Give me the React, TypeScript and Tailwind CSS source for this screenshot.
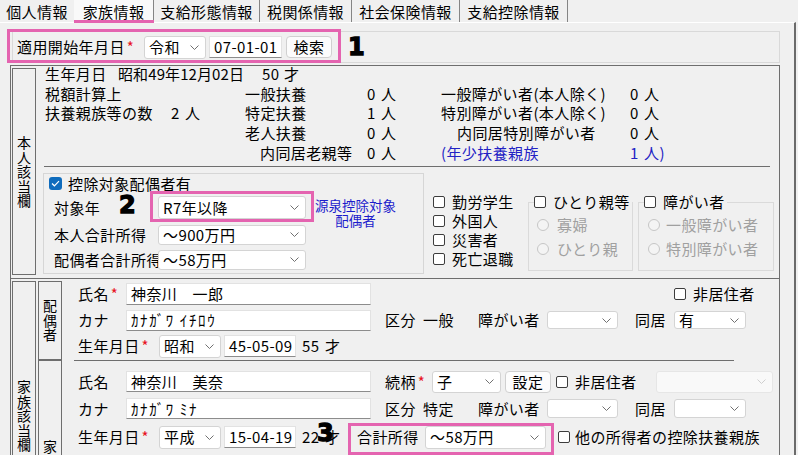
import React from "react";

function Chev({ light }: { light?: boolean }) {
  return (
    <svg width="9" height="5" viewBox="0 0 9 5" className="shrink-0">
      <path d="M0.5 0.5 L4.5 4.5 L8.5 0.5" fill="none" stroke={light ? "#cfcfcf" : "#707070"} strokeWidth="1" />
    </svg>
  );
}

function Sel({ cls, text, disabled }: { cls: string; text?: string; disabled?: boolean }) {
  return (
    <div
      className={`flex items-center justify-between shrink-0 rounded-[3px] border pl-[4px] pr-[6px] ${
        disabled ? "bg-[#f9f9f9] border-[#e6e6e6]" : "bg-white border-[#d4d4d4]"
      } ${cls}`}
    >
      <span className="whitespace-nowrap">{text ?? ""}</span>
      <Chev light={disabled} />
    </div>
  );
}

function Inp({ cls, text }: { cls: string; text: string }) {
  return (
    <div
      className={`flex items-center shrink-0 bg-white border border-[#e2e2e2] border-b-[#8c8c8c] pl-[4px] whitespace-nowrap ${cls}`}
    >
      {text}
    </div>
  );
}

function Btn({ cls, text }: { cls: string; text: string }) {
  return (
    <div
      className={`flex items-center justify-center shrink-0 bg-[#fcfcfc] border border-[#d0d0d0] rounded-[4px] ${cls}`}
    >
      {text}
    </div>
  );
}

function Cb({ checked }: { checked?: boolean }) {
  if (checked)
    return (
      <span className="flex items-center justify-center shrink-0 w-[13px] h-[13px] rounded-[3px] bg-[#0f6cbd]">
        <svg width="9" height="7" viewBox="0 0 9 7">
          <path d="M1 3.5 L3.4 5.8 L8 1.2" fill="none" stroke="white" strokeWidth="1.2" />
        </svg>
      </span>
    );
  return <span className="block shrink-0 w-[12px] h-[12px] rounded-[2px] border border-[#3c3c3c] bg-white" />;
}

function Radio() {
  return <span className="block shrink-0 w-[12px] h-[12px] rounded-full border border-[#c6c6c6] bg-[#f4f4f4]" />;
}

function Req() {
  return <span className="text-[#e81123] ml-[2px]">*</span>;
}

function Num({ n, u = "人" }: { n: string; u?: string }) {
  return (
    <span className="flex">
      <span className="inline-block w-[14px]">{n}</span>
      <span>{u}</span>
    </span>
  );
}

function VLabel({ text, cls }: { text: string; cls: string }) {
  return (
    <div className={`flex flex-col items-center shrink-0 w-[24px] border border-[#6e6e6e] ${cls}`}>
      <span className="[writing-mode:vertical-rl] [text-orientation:upright] text-[14px] leading-[22px] tracking-[0.4px]">
        {text}
      </span>
    </div>
  );
}

const PINK = "border-[#e464b0]";
const BIG = "absolute text-[24px] leading-[24px] font-bold font-['DejaVu_Sans',sans-serif] [-webkit-text-stroke:1.3px_black] tracking-normal";

export default function App() {
  return (
    <div className="relative w-[798px] h-[455px] overflow-hidden bg-[#f0f0f0] text-[15px] leading-[20px] tracking-[0.4px] text-black font-['Noto_Sans_CJK_JP','Noto_Sans',sans-serif]">
      {/* Tabs */}
      <div className="flex h-[22px]">
        <div className="w-[74px] h-[22px] leading-[24px] text-center">個人情報</div>
        <div className="relative w-[80px] h-[22px] leading-[24px] text-center bg-[#f9f9f9] border-r border-r-[#858585]">
          家族情報
          <span className="absolute left-0 right-[-1px] bottom-[-1px] h-[3px] bg-[#e464b0]" />
        </div>
        <div className="w-[106px] h-[22px] leading-[24px] text-center border-r border-r-[#858585]">支給形態情報</div>
        <div className="w-[92px] h-[22px] leading-[24px] text-center border-r border-r-[#858585]">税関係情報</div>
        <div className="w-[108px] h-[22px] leading-[24px] text-center border-r border-r-[#858585]">社会保険情報</div>
        <div className="w-[108px] h-[22px] leading-[24px] text-center border-r border-r-[#858585]">支給控除情報</div>
      </div>

      {/* Panel */}
      <div className="w-[796px] h-[433px] overflow-hidden border-t border-t-white border-r-2 border-r-[#6b6b6b]">
        {/* Header */}
        <div className="ml-[12px] mt-[8px] w-[768px] h-[32px] border border-[#d9d9d9] flex items-center pl-[4px]">
          <span className="w-[127px] shrink-0 whitespace-nowrap">
            適用開始年月日
            <Req />
          </span>
          <Sel cls="w-[62px] h-[23px]" text="令和" />
          <Inp cls="ml-[3px] w-[73px] h-[22px]" text="07-01-01" />
          <Btn cls="ml-[4px] w-[46px] h-[22px]" text="検索" />
        </div>

        {/* Section 1 */}
        <div className="ml-[10px] mt-[2px] w-[770px] h-[214px] border border-[#6e6e6e] flex">
          <VLabel text="本人該当欄" cls="ml-[1px] mt-[2px] h-[207px] justify-center" />
          <div className="flex-1 flex flex-col">
            <div className="-mt-[2px] h-[102px] pl-[9px] whitespace-nowrap">
              <div className="flex h-[19.7px] leading-[19.7px]">
                <span className="w-[73px]">生年月日</span>
                <span className="w-[144px] tracking-[0.1px]">昭和49年12月02日</span>
                <span className="w-[22px]">50</span>
                <span>才</span>
              </div>
              <div className="flex h-[19.7px] leading-[19.7px]">
                <span className="w-[200px]">税額計算上</span>
                <span className="w-[122px]">一般扶養</span>
                <span className="w-[74px]"><Num n="0" /></span>
                <span className="w-[189px]">一般障がい者(本人除く)</span>
                <Num n="0" />
              </div>
              <div className="flex h-[19.7px] leading-[19.7px]">
                <span className="w-[126px]">扶養親族等の数</span>
                <span className="w-[74px]"><Num n="2" /></span>
                <span className="w-[122px]">特定扶養</span>
                <span className="w-[74px]"><Num n="1" /></span>
                <span className="w-[189px]">特別障がい者(本人除く)</span>
                <Num n="0" />
              </div>
              <div className="flex h-[19.7px] leading-[19.7px]">
                <span className="w-[200px]" />
                <span className="w-[122px]">老人扶養</span>
                <span className="w-[74px]"><Num n="0" /></span>
                <span className="w-[189px] pl-[16px]">内同居特別障がい者</span>
                <Num n="0" />
              </div>
              <div className="flex h-[19.7px] leading-[19.7px]">
                <span className="w-[200px]" />
                <span className="w-[122px] pl-[15px]">内同居老親等</span>
                <span className="w-[74px]"><Num n="0" /></span>
                <span className="w-[189px] text-[#2222c4]">(年少扶養親族</span>
                <span className="text-[#2222c4]"><Num n="1" u="人)" /></span>
              </div>
            </div>
            <div className="ml-[8px] w-[726px] h-px bg-[#6e6e6e]" />
            <div className="flex items-start">
              {/* spouse group */}
              <div className="ml-[7px] mt-[6px] w-[381px] h-[101px] border border-[#d6d6d6] shrink-0">
                <div className="flex items-center pl-[5px] mt-[3px] h-[13px] whitespace-nowrap">
                  <Cb checked />
                  <span className="ml-[6px]">控除対象配偶者有</span>
                </div>
                <div className="flex mt-[6px] h-[23px] pl-[10px] whitespace-nowrap">
                  <span className="w-[104px] shrink-0 self-center">対象年</span>
                  <Sel cls="w-[148px] h-[23px]" text="R7年以降" />
                  <span className="ml-[9px] mt-[2px] self-start text-center text-[13.5px] leading-[15px] tracking-normal text-[#1c1ccc]">
                    源泉控除対象
                    <br />
                    配偶者
                  </span>
                </div>
                <div className="flex items-center mt-[5px] h-[21px] pl-[10px] whitespace-nowrap">
                  <span className="w-[104px] shrink-0">本人合計所得</span>
                  <Sel cls="w-[148px] h-[20px]" text="～900万円" />
                </div>
                <div className="flex items-center mt-[4px] h-[21px] pl-[10px] whitespace-nowrap">
                  <span className="w-[104px] shrink-0">配偶者合計所得</span>
                  <Sel cls="w-[148px] h-[20px]" text="～58万円" />
                </div>
              </div>
              {/* checkbox column */}
              <div className="ml-[9px] mt-[25px] w-[95px] shrink-0 whitespace-nowrap">
                {["勤労学生", "外国人", "災害者", "死亡退職"].map((t) => (
                  <div key={t} className="flex items-center h-[19px]">
                    <Cb />
                    <span className="ml-[7px]">{t}</span>
                  </div>
                ))}
              </div>
              {/* ひとり親等 */}
              <div className="mt-[35px] w-[105px] h-[69px] border border-[#dadada] shrink-0 whitespace-nowrap">
                <div className="-mt-[8px] h-[14px] flex items-center pl-[5px]">
                  <span className="inline-flex items-center bg-[#f0f0f0] pr-[2px]">
                    <Cb />
                    <span className="ml-[7px]">ひとり親等</span>
                  </span>
                </div>
                <div className="mt-[4px] h-[24px] flex items-center pl-[8px] text-[#a0a0a0]">
                  <Radio />
                  <span className="ml-[8px]">寡婦</span>
                </div>
                <div className="h-[24px] flex items-center pl-[8px] text-[#a0a0a0]">
                  <Radio />
                  <span className="ml-[8px]">ひとり親</span>
                </div>
              </div>
              {/* 障がい者 */}
              <div className="ml-[5px] mt-[35px] w-[136px] h-[69px] border border-[#dadada] shrink-0 whitespace-nowrap">
                <div className="-mt-[8px] h-[14px] flex items-center pl-[5px]">
                  <span className="inline-flex items-center bg-[#f0f0f0] pr-[2px]">
                    <Cb />
                    <span className="ml-[7px]">障がい者</span>
                  </span>
                </div>
                <div className="mt-[4px] h-[24px] flex items-center pl-[9px] text-[#a0a0a0]">
                  <Radio />
                  <span className="ml-[6px]">一般障がい者</span>
                </div>
                <div className="h-[24px] flex items-center pl-[9px] text-[#a0a0a0]">
                  <Radio />
                  <span className="ml-[6px]">特別障がい者</span>
                </div>
              </div>
            </div>
          </div>
        </div>

        {/* Section 2 */}
        <div className="ml-[10px] w-[770px] h-[200px] border-l border-r border-[#6e6e6e] flex">
          <VLabel text="家族該当欄" cls="ml-[1px] mt-[2px] h-[200px] pt-[98px]" />
          <div className="flex-1 flex flex-col">
            {/* spouse */}
            <div className="flex h-[83px]">
              <VLabel text="配偶者" cls="ml-[2px] mt-[2px] h-[79px] justify-center" />
              <div className="flex flex-col pt-[2px] whitespace-nowrap">
                <div className="flex items-center h-[26px] pl-[16px]">
                  <span className="w-[48px] shrink-0">
                    氏名
                    <Req />
                  </span>
                  <Inp cls="w-[245px] h-[22px]" text="神奈川　一郎" />
                  <span className="ml-[303px] flex items-center">
                    <Cb />
                    <span className="ml-[7px]">非居住者</span>
                  </span>
                </div>
                <div className="flex items-center h-[26px] pl-[16px]">
                  <span className="w-[48px] shrink-0">カナ</span>
                  <Inp cls="w-[245px] h-[21px] tracking-[1.6px]" text="ｶﾅｶﾞﾜ ｲﾁﾛｳ" />
                  <span className="ml-[14px] w-[38px] shrink-0">区分</span>
                  <span className="w-[55px] shrink-0">一般</span>
                  <span className="w-[69px] shrink-0">障がい者</span>
                  <Sel cls="w-[71px] h-[18px]" />
                  <span className="w-[56px] pl-[17px] shrink-0">同居</span>
                  <Sel cls="w-[72px] h-[18px]" text="有" />
                </div>
                <div className="flex items-center h-[26px] pl-[16px]">
                  <span className="w-[81px] shrink-0">
                    生年月日
                    <Req />
                  </span>
                  <Sel cls="w-[62px] h-[23px]" text="昭和" />
                  <Inp cls="ml-[3px] w-[72px] h-[22px]" text="45-05-09" />
                  <span className="ml-[6px] w-[23px]">55</span>
                  <span>才</span>
                </div>
              </div>
            </div>
            {/* family member */}
            <div className="flex">
              <VLabel text="家" cls="ml-[2px] h-[120px] pt-[79px]" />
              <div className="flex flex-col whitespace-nowrap">
                <div className="ml-[12px] w-[660px] h-px bg-[#6e6e6e]" />
                <div className="flex items-center h-[27px] mt-[7px] pl-[16px]">
                  <span className="w-[48px] shrink-0">氏名</span>
                  <Inp cls="w-[245px] h-[21px]" text="神奈川　美奈" />
                  <span className="ml-[14px] w-[47px] shrink-0">
                    続柄
                    <Req />
                  </span>
                  <Sel cls="w-[69px] h-[22px]" text="子" />
                  <Btn cls="ml-[4px] w-[46px] h-[22px]" text="設定" />
                  <span className="ml-[5px] flex items-center">
                    <Cb />
                    <span className="ml-[7px]">非居住者</span>
                  </span>
                  <Sel cls="ml-[19px] w-[117px] h-[22px]" disabled />
                </div>
                <div className="flex items-center h-[27px] pl-[16px]">
                  <span className="w-[48px] shrink-0">カナ</span>
                  <Inp cls="w-[245px] h-[21px] tracking-[1.6px]" text="ｶﾅｶﾞﾜ ﾐﾅ" />
                  <span className="ml-[14px] w-[38px] shrink-0">区分</span>
                  <span className="w-[55px] shrink-0">特定</span>
                  <span className="w-[69px] shrink-0">障がい者</span>
                  <Sel cls="w-[71px] h-[19px]" />
                  <span className="w-[56px] pl-[17px] shrink-0">同居</span>
                  <Sel cls="w-[72px] h-[19px]" />
                </div>
                <div className="flex items-center h-[28px] mt-[1px] pl-[16px]">
                  <span className="w-[81px] shrink-0">
                    生年月日
                    <Req />
                  </span>
                  <Sel cls="w-[62px] h-[23px]" text="平成" />
                  <Inp cls="ml-[3px] w-[72px] h-[22px]" text="15-04-19" />
                  <span className="ml-[6px] w-[55px] shrink-0 flex">
                    <span className="w-[23px]">22</span>
                    <span>才</span>
                  </span>
                  <span className="w-[68px] shrink-0">合計所得</span>
                  <Sel cls="w-[121px] h-[23px]" text="～58万円" />
                  <span className="ml-[12px] flex items-center">
                    <Cb />
                    <span className="ml-[5px]">他の所得者の控除扶養親族</span>
                  </span>
                </div>
              </div>
            </div>
          </div>
        </div>
      </div>

      {/* Annotation overlays */}
      <div className={`absolute left-[7px] top-[29px] w-[334px] h-[34px] border-[3px] ${PINK}`} />
      <div className={`absolute left-[150px] top-[191px] w-[164px] h-[31px] border-[3px] ${PINK}`} />
      <div className={`absolute left-[348px] top-[423px] w-[206px] h-[32px] border-[3px] ${PINK}`} />
      <div className={`${BIG} left-[348px] top-[35px]`}>1</div>
      <div className={`${BIG} left-[119px] top-[193px]`}>2</div>
      <div className={`${BIG} left-[317px] top-[421px]`}>3</div>
    </div>
  );
}
